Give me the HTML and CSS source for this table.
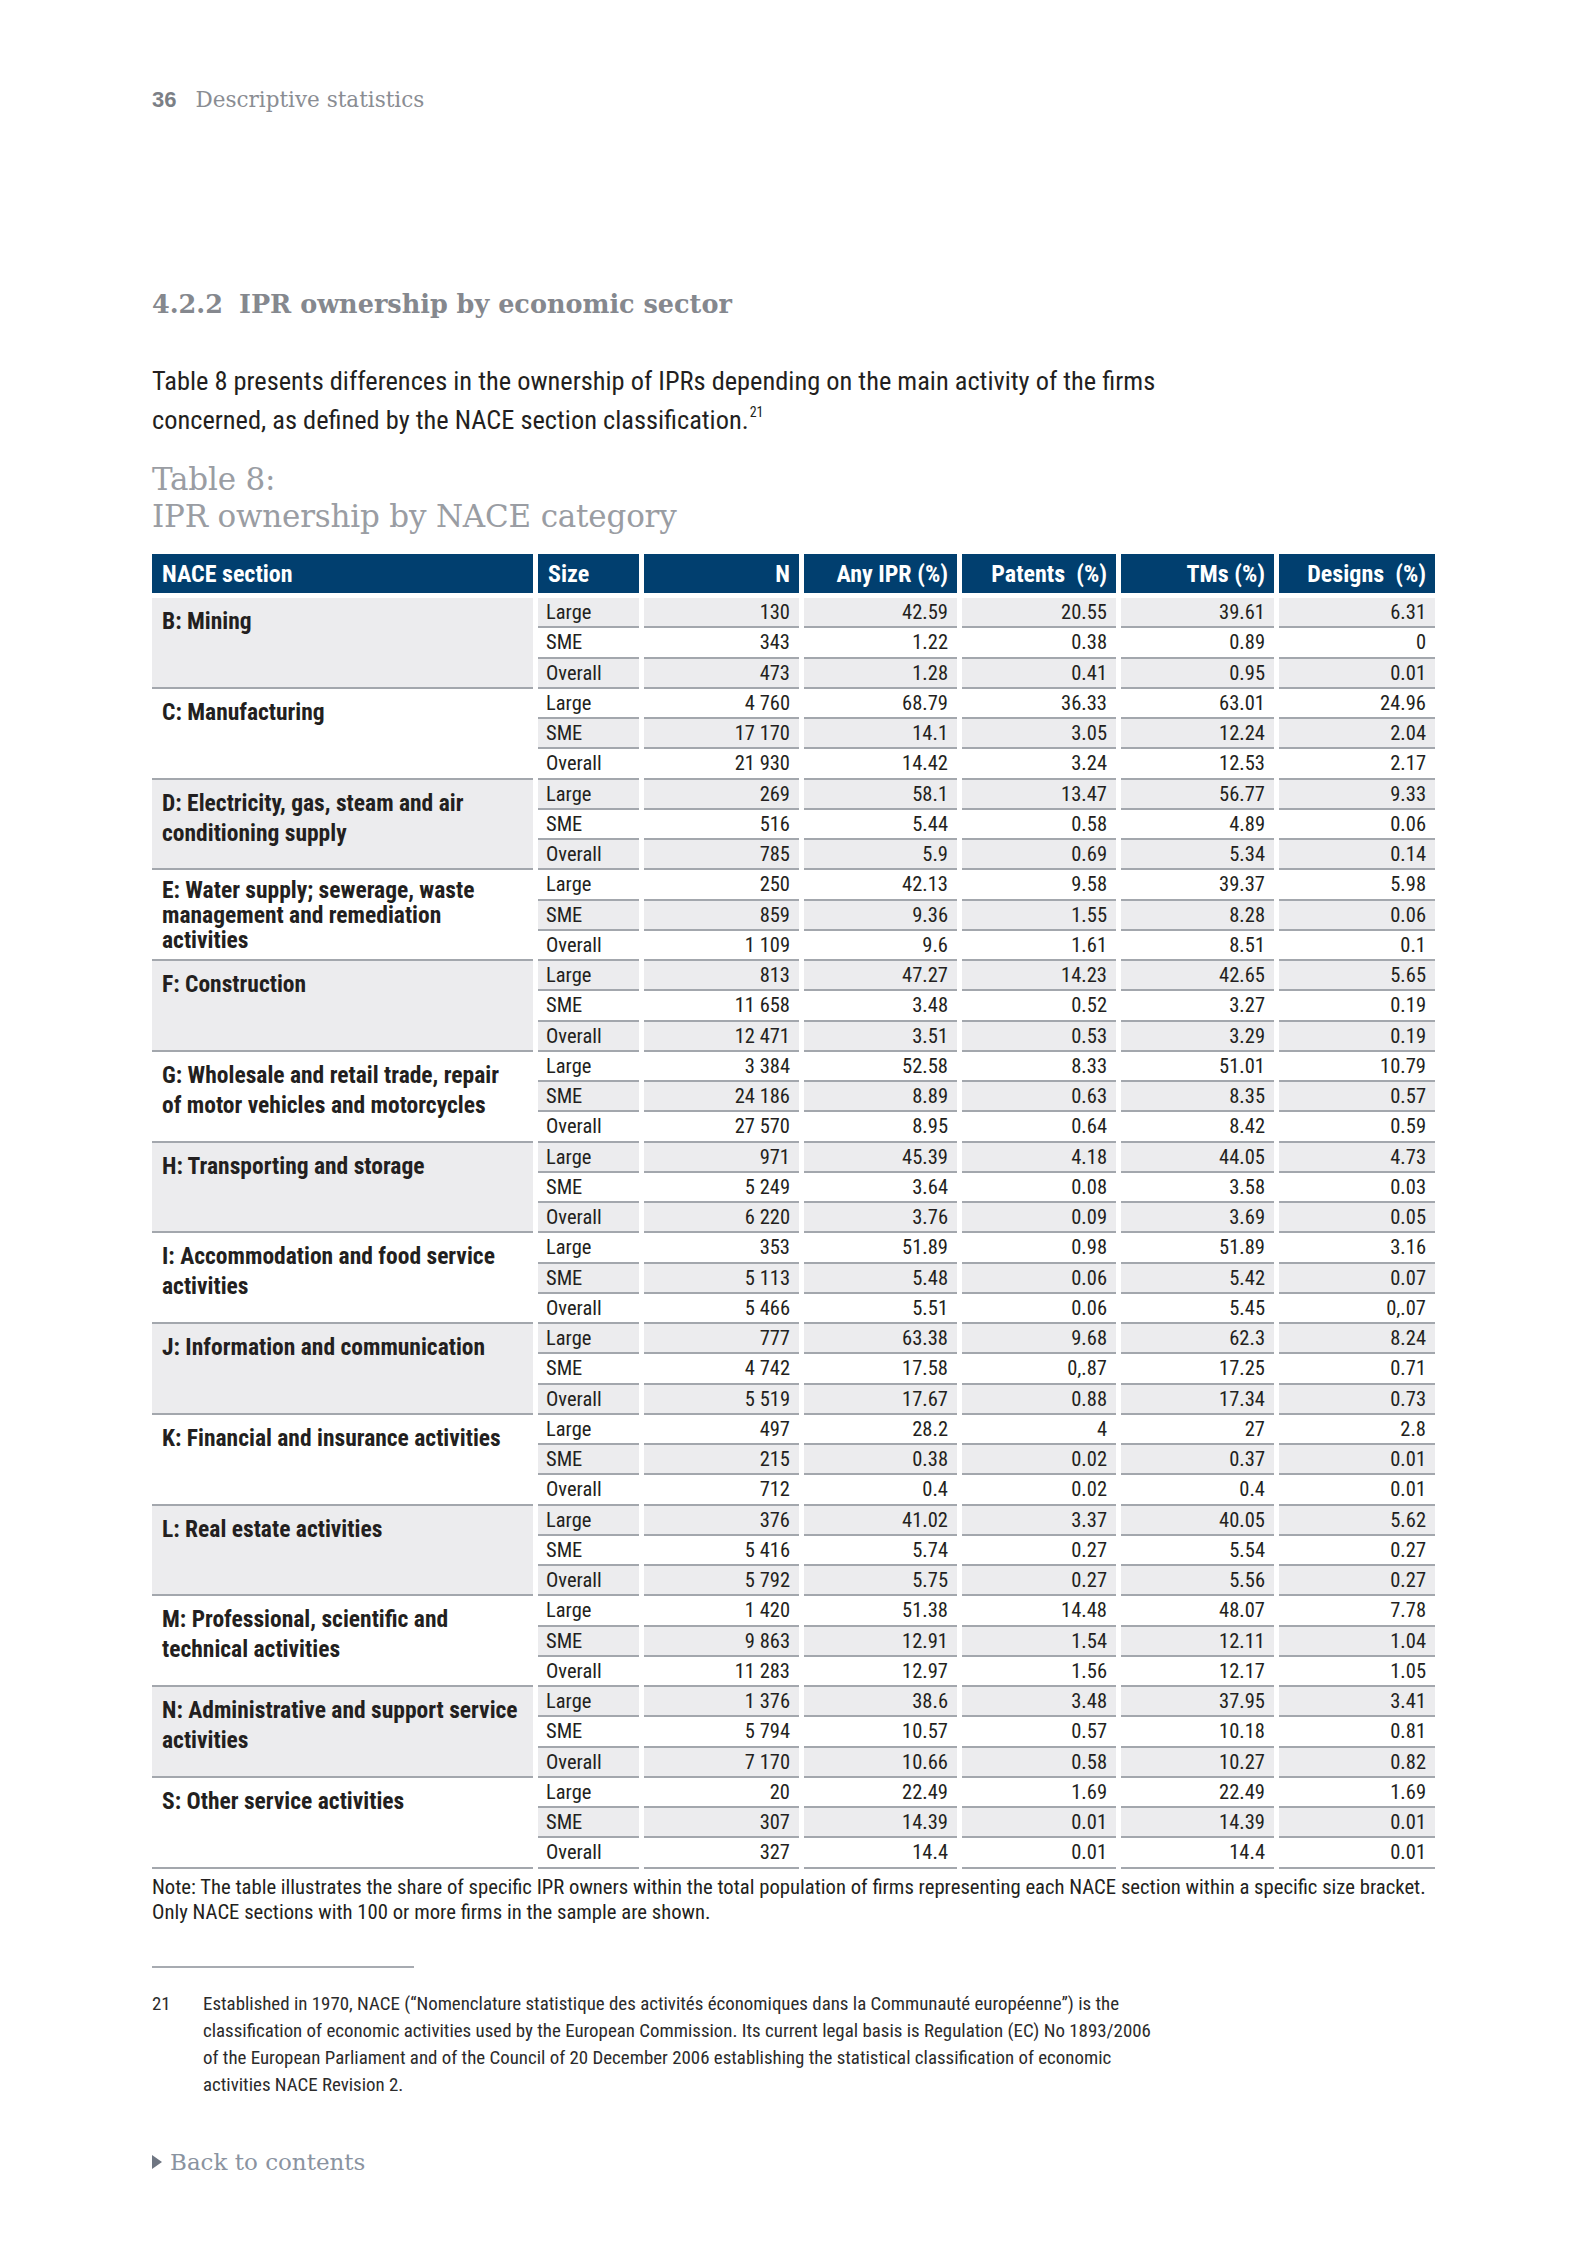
FILE: index.html
```html
<!DOCTYPE html>
<html lang="en">
<head>
<meta charset="utf-8">
<title>IPR ownership by economic sector</title>
<link rel="stylesheet" href="styles.css">
</head>
<body>
<div class="page">
  <header class="running-head"><span class="page-no">36</span><span class="chapter">Descriptive statistics</span></header>

  <h2 class="section-title"><span class="sec-no">4.2.2</span>IPR ownership by economic sector</h2>

  <p class="body-text">Table 8 presents differences in the ownership of IPRs depending on the main activity of the firms<br>concerned, as defined by the NACE section classification.<sup>21</sup></p>

  <div class="caption">Table 8:<br>IPR ownership by NACE category</div>

  <table class="data">
    <colgroup>
      <col class="c-nace"><col class="c-size"><col class="c-n"><col class="c-any"><col class="c-pat"><col class="c-tm"><col class="c-des">
    </colgroup>
    <thead>
      <tr><th class="l">NACE section</th><th class="l">Size</th><th>N</th><th>Any IPR (%)</th><th>Patents&nbsp; (%)</th><th>TMs (%)</th><th>Designs&nbsp; (%)</th></tr>
    </thead>
    <tbody>
      <tr class="g"><td class="nace" rowspan="3">B: Mining</td><td class="s">Large</td><td>130</td><td>42.59</td><td>20.55</td><td>39.61</td><td>6.31</td></tr>
      <tr class="w"><td class="s">SME</td><td>343</td><td>1.22</td><td>0.38</td><td>0.89</td><td>0</td></tr>
      <tr class="g"><td class="s">Overall</td><td>473</td><td>1.28</td><td>0.41</td><td>0.95</td><td>0.01</td></tr>

      <tr class="w"><td class="nace" rowspan="3">C: Manufacturing</td><td class="s">Large</td><td>4 760</td><td>68.79</td><td>36.33</td><td>63.01</td><td>24.96</td></tr>
      <tr class="g"><td class="s">SME</td><td>17 170</td><td>14.1</td><td>3.05</td><td>12.24</td><td>2.04</td></tr>
      <tr class="w"><td class="s">Overall</td><td>21 930</td><td>14.42</td><td>3.24</td><td>12.53</td><td>2.17</td></tr>

      <tr class="g"><td class="nace" rowspan="3">D: Electricity, gas, steam and air<br>conditioning supply</td><td class="s">Large</td><td>269</td><td>58.1</td><td>13.47</td><td>56.77</td><td>9.33</td></tr>
      <tr class="w"><td class="s">SME</td><td>516</td><td>5.44</td><td>0.58</td><td>4.89</td><td>0.06</td></tr>
      <tr class="g"><td class="s">Overall</td><td>785</td><td>5.9</td><td>0.69</td><td>5.34</td><td>0.14</td></tr>

      <tr class="w"><td class="nace tight" rowspan="3">E: Water supply; sewerage, waste<br>management and remediation<br>activities</td><td class="s">Large</td><td>250</td><td>42.13</td><td>9.58</td><td>39.37</td><td>5.98</td></tr>
      <tr class="g"><td class="s">SME</td><td>859</td><td>9.36</td><td>1.55</td><td>8.28</td><td>0.06</td></tr>
      <tr class="w"><td class="s">Overall</td><td>1 109</td><td>9.6</td><td>1.61</td><td>8.51</td><td>0.1</td></tr>

      <tr class="g"><td class="nace" rowspan="3">F: Construction</td><td class="s">Large</td><td>813</td><td>47.27</td><td>14.23</td><td>42.65</td><td>5.65</td></tr>
      <tr class="w"><td class="s">SME</td><td>11 658</td><td>3.48</td><td>0.52</td><td>3.27</td><td>0.19</td></tr>
      <tr class="g"><td class="s">Overall</td><td>12 471</td><td>3.51</td><td>0.53</td><td>3.29</td><td>0.19</td></tr>

      <tr class="w"><td class="nace" rowspan="3">G: Wholesale and retail trade, repair<br>of motor vehicles and motorcycles</td><td class="s">Large</td><td>3 384</td><td>52.58</td><td>8.33</td><td>51.01</td><td>10.79</td></tr>
      <tr class="g"><td class="s">SME</td><td>24 186</td><td>8.89</td><td>0.63</td><td>8.35</td><td>0.57</td></tr>
      <tr class="w"><td class="s">Overall</td><td>27 570</td><td>8.95</td><td>0.64</td><td>8.42</td><td>0.59</td></tr>

      <tr class="g"><td class="nace" rowspan="3">H: Transporting and storage</td><td class="s">Large</td><td>971</td><td>45.39</td><td>4.18</td><td>44.05</td><td>4.73</td></tr>
      <tr class="w"><td class="s">SME</td><td>5 249</td><td>3.64</td><td>0.08</td><td>3.58</td><td>0.03</td></tr>
      <tr class="g"><td class="s">Overall</td><td>6 220</td><td>3.76</td><td>0.09</td><td>3.69</td><td>0.05</td></tr>

      <tr class="w"><td class="nace" rowspan="3">I: Accommodation and food service<br>activities</td><td class="s">Large</td><td>353</td><td>51.89</td><td>0.98</td><td>51.89</td><td>3.16</td></tr>
      <tr class="g"><td class="s">SME</td><td>5 113</td><td>5.48</td><td>0.06</td><td>5.42</td><td>0.07</td></tr>
      <tr class="w"><td class="s">Overall</td><td>5 466</td><td>5.51</td><td>0.06</td><td>5.45</td><td>0,.07</td></tr>

      <tr class="g"><td class="nace" rowspan="3">J: Information and communication</td><td class="s">Large</td><td>777</td><td>63.38</td><td>9.68</td><td>62.3</td><td>8.24</td></tr>
      <tr class="w"><td class="s">SME</td><td>4 742</td><td>17.58</td><td>0,.87</td><td>17.25</td><td>0.71</td></tr>
      <tr class="g"><td class="s">Overall</td><td>5 519</td><td>17.67</td><td>0.88</td><td>17.34</td><td>0.73</td></tr>

      <tr class="w"><td class="nace" rowspan="3">K: Financial and insurance activities</td><td class="s">Large</td><td>497</td><td>28.2</td><td>4</td><td>27</td><td>2.8</td></tr>
      <tr class="g"><td class="s">SME</td><td>215</td><td>0.38</td><td>0.02</td><td>0.37</td><td>0.01</td></tr>
      <tr class="w"><td class="s">Overall</td><td>712</td><td>0.4</td><td>0.02</td><td>0.4</td><td>0.01</td></tr>

      <tr class="g"><td class="nace" rowspan="3">L: Real estate activities</td><td class="s">Large</td><td>376</td><td>41.02</td><td>3.37</td><td>40.05</td><td>5.62</td></tr>
      <tr class="w"><td class="s">SME</td><td>5 416</td><td>5.74</td><td>0.27</td><td>5.54</td><td>0.27</td></tr>
      <tr class="g"><td class="s">Overall</td><td>5 792</td><td>5.75</td><td>0.27</td><td>5.56</td><td>0.27</td></tr>

      <tr class="w"><td class="nace" rowspan="3">M: Professional, scientific and<br>technical activities</td><td class="s">Large</td><td>1 420</td><td>51.38</td><td>14.48</td><td>48.07</td><td>7.78</td></tr>
      <tr class="g"><td class="s">SME</td><td>9 863</td><td>12.91</td><td>1.54</td><td>12.11</td><td>1.04</td></tr>
      <tr class="w"><td class="s">Overall</td><td>11 283</td><td>12.97</td><td>1.56</td><td>12.17</td><td>1.05</td></tr>

      <tr class="g"><td class="nace" rowspan="3">N: Administrative and support service<br>activities</td><td class="s">Large</td><td>1 376</td><td>38.6</td><td>3.48</td><td>37.95</td><td>3.41</td></tr>
      <tr class="w"><td class="s">SME</td><td>5 794</td><td>10.57</td><td>0.57</td><td>10.18</td><td>0.81</td></tr>
      <tr class="g"><td class="s">Overall</td><td>7 170</td><td>10.66</td><td>0.58</td><td>10.27</td><td>0.82</td></tr>

      <tr class="w"><td class="nace" rowspan="3">S: Other service activities</td><td class="s">Large</td><td>20</td><td>22.49</td><td>1.69</td><td>22.49</td><td>1.69</td></tr>
      <tr class="g"><td class="s">SME</td><td>307</td><td>14.39</td><td>0.01</td><td>14.39</td><td>0.01</td></tr>
      <tr class="w"><td class="s">Overall</td><td>327</td><td>14.4</td><td>0.01</td><td>14.4</td><td>0.01</td></tr>
    </tbody>
  </table>

  <p class="note">Note: The table illustrates the share of specific IPR owners within the total population of firms representing each NACE section within a specific size bracket.<br>Only NACE sections with 100 or more firms in the sample are shown.</p>

  <hr class="fn-rule">

  <div class="footnote">
    <span class="fn-no">21</span>
    <p class="fn-text">Established in 1970, NACE (“Nomenclature statistique des activités économiques dans la Communauté européenne”) is the<br>classification of economic activities used by the European Commission. Its current legal basis is Regulation (EC) No 1893/2006<br>of the European Parliament and of the Council of 20 December 2006 establishing the statistical classification of economic<br>activities NACE Revision 2.</p>
  </div>

  <a class="back" href="#"><span class="tri"></span>Back to contents</a>
</div>
</body>
</html>
```

FILE: styles.css
```css
html, body {
  margin: 0;
  padding: 0;
  background: #ffffff;
}

.page {
  width: 1283px;
  padding: 85px 152px 60px;
  font-family: Roboto, "Liberation Sans", sans-serif;
  font-stretch: 75%;
  color: #231f20;
}

.running-head {
  display: flex;
  align-items: baseline;
  height: 30px;
  line-height: 30px;
}

.page-no {
  font-family: "Liberation Sans", Arial, sans-serif;
  font-stretch: normal;
  font-weight: 700;
  font-size: 22px;
  color: #7b7f86;
  margin-right: 19px;
}

.chapter {
  font-family: "DejaVu Serif", serif;
  font-stretch: normal;
  font-size: 21.5px;
  color: #8a8d93;
}

.section-title {
  margin: 171px 0 0;
  font-family: "DejaVu Serif", serif;
  font-stretch: normal;
  font-weight: 700;
  font-size: 25.5px;
  line-height: 36px;
  color: #85888e;
}

.sec-no {
  margin-right: 16px;
}

.body-text {
  margin: 40px 0 0;
  font-size: 26.4px;
  line-height: 39px;
  white-space: nowrap;
}

.body-text sup {
  font-size: 14px;
  line-height: 0;
  vertical-align: 12px;
  margin-left: 1px;
}

.caption {
  margin-top: 21px;
  font-family: "DejaVu Serif", serif;
  font-stretch: normal;
  font-size: 31px;
  line-height: 37px;
  color: #9a9da3;
  letter-spacing: -0.2px;
}

.data {
  margin: 19px -5px 0;
  width: 1293px;
  table-layout: fixed;
  border-collapse: separate;
  border-spacing: 5px 0;
  font-size: 20.5px;
}

.c-nace { width: 381px; }
.c-size { width: 101px; }
.c-n { width: 155px; }
.c-any { width: 153px; }
.c-pat { width: 154px; }
.c-tm { width: 153px; }
.c-des { width: 156px; }

.data th {
  height: 39px;
  padding: 0 9px;
  background: #013f6f;
  color: #ffffff;
  font-weight: 700;
  font-size: 24px;
  text-align: right;
  border-bottom: 5px solid #ffffff;
  white-space: nowrap;
}

.data th.l {
  text-align: left;
  padding-left: 10px;
}

.data td {
  height: 28.25px;
  padding: 0 9px 0 8px;
  text-align: right;
  border-bottom: 2px solid #a3a7ad;
  line-height: 24px;
  white-space: nowrap;
}

.data td.s {
  text-align: left;
}

.data td.nace {
  text-align: left;
  vertical-align: top;
  padding: 8px 10px 0;
  font-weight: 700;
  font-size: 23.5px;
  line-height: 30px;
}

.data td.nace.tight {
  line-height: 25px;
}

.data tr.g td {
  background: #ececee;
}

.data tr.w td {
  background: #ffffff;
}

.note {
  margin: 6px 0 0;
  font-size: 20.7px;
  line-height: 25px;
  white-space: nowrap;
}

.fn-rule {
  margin: 41px 0 0;
  width: 262px;
  height: 0;
  border: 0;
  border-top: 2px solid #a7abb1;
}

.footnote {
  display: flex;
  margin-top: 22px;
  font-size: 18.9px;
  line-height: 27px;
  color: #2b2b2b;
}

.fn-no {
  width: 51px;
  flex: none;
}

.fn-text {
  margin: 0;
  white-space: nowrap;
}

.back {
  display: flex;
  align-items: center;
  margin-top: 49px;
  height: 30px;
  font-family: "DejaVu Serif", serif;
  font-stretch: normal;
  font-size: 23px;
  color: #8a93a0;
  text-decoration: none;
}

.tri {
  width: 0;
  height: 0;
  border-top: 7px solid transparent;
  border-bottom: 7px solid transparent;
  border-left: 10px solid #6f7682;
  margin-right: 8px;
}
```
